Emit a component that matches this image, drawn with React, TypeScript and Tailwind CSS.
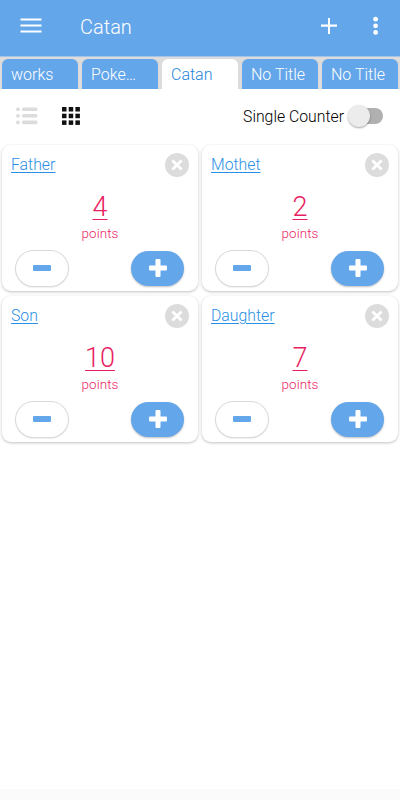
import { useState } from "react";

const tabs = ["works", "Poke…", "Catan", "No Title", "No Title"];

const initialPlayers = [
  { name: "Father", points: 4 },
  { name: "Mothet", points: 2 },
  { name: "Son", points: 10 },
  { name: "Daughter", points: 7 },
];

type CardProps = {
  name: string;
  points: number;
  onChange: (delta: number) => void;
  onRemove: () => void;
};

function CounterCard({ name, points, onChange, onRemove }: CardProps) {
  return (
    <div className="flex h-[146px] flex-col rounded-[9px] bg-white shadow-[0_1px_3px_rgba(0,0,0,0.25)]">
      <div className="flex h-[40px] items-center justify-between pl-[9px] pr-[9px]">
        <span className="text-[15.8px] font-light leading-5 text-[#2a8fe6] underline decoration-1 underline-offset-2">
          {name}
        </span>
        <button
          onClick={onRemove}
          className="flex size-6 items-center justify-center rounded-full bg-[#dcdcdc]"
        >
          <svg width="12" height="12" viewBox="0 0 12 12" stroke="white" strokeWidth="2.8">
            <path d="M1.4 1.4l9.2 9.2M10.6 1.4l-9.2 9.2" />
          </svg>
        </button>
      </div>
      <div className="flex flex-col items-center pt-[7px] text-[#e91e63]">
        <span className="text-[27px] font-light leading-[31px] underline decoration-1 underline-offset-[3px]">
          {points}
        </span>
        <span className="mt-[3px] text-[13.4px] font-light leading-4 tracking-[0.1px]">points</span>
      </div>
      <div className="mt-auto flex justify-between pb-[5px] pl-[14px] pr-[14px]">
        <button
          onClick={() => onChange(-1)}
          className="flex h-[35px] w-[52px] items-center justify-center rounded-full bg-white shadow-[0_0_0_1px_#d9d9d9,0_1px_2px_rgba(0,0,0,0.2)]"
        >
          <span className="h-[6px] w-[18px] rounded-[1px] bg-[#64a6ea]" />
        </button>
        <button
          onClick={() => onChange(1)}
          className="flex h-[35px] w-[53px] items-center justify-center rounded-full bg-[#64a6ea] shadow-[0_1px_2px_rgba(0,0,0,0.25)]"
        >
          <svg width="18" height="18" viewBox="0 0 18 18" fill="white">
            <rect x="6.5" y="0" width="5" height="18" rx="1" />
            <rect x="0" y="6.5" width="18" height="5" rx="1" />
          </svg>
        </button>
      </div>
    </div>
  );
}

export default function App() {
  const [activeTab, setActiveTab] = useState(2);
  const [single, setSingle] = useState(false);
  const [players, setPlayers] = useState(initialPlayers);

  const changePoints = (index: number, delta: number) => {
    setPlayers(players.map((p, i) => (i === index ? { ...p, points: p.points + delta } : p)));
  };

  return (
    <main className="flex h-[800px] w-[400px] flex-col overflow-hidden bg-white font-[Roboto,sans-serif]">
      {/* App bar */}
      <header className="flex h-14 shrink-0 items-center bg-[#64a6ea] pb-[5px] pl-5 text-white">
        <button className="flex">
          <svg width="22" height="16" viewBox="0 0 22 16" fill="white">
            <rect x="0.5" y="0.5" width="21" height="2" />
            <rect x="0.5" y="6.5" width="21" height="2" />
            <rect x="0.5" y="12.5" width="21" height="2" />
          </svg>
        </button>
        <h1 className="ml-[38px] pt-[2px] text-[20px] font-light leading-6">Catan</h1>
        <button className="ml-auto">
          <svg width="18" height="18" viewBox="0 0 18 18" fill="white">
            <rect x="8" y="1" width="2" height="16" />
            <rect x="1" y="7.5" width="16" height="2.2" />
          </svg>
        </button>
        <button className="ml-[35px] mr-[21px]">
          <svg width="6" height="20" viewBox="0 0 6 20" fill="white">
            <circle cx="2.6" cy="3.2" r="2.4" />
            <circle cx="2.6" cy="9.8" r="2.4" />
            <circle cx="2.6" cy="16.4" r="2.4" />
          </svg>
        </button>
      </header>

      {/* Tabs */}
      <nav className="grid h-[33px] shrink-0 grid-cols-5 gap-1 border-t border-[#a5c4e6] bg-[#dcdcdc] px-[2px] pt-[2px]">
        {tabs.map((tab, i) => (
          <button
            key={i}
            onClick={() => setActiveTab(i)}
            className={
              i === activeTab
                ? "rounded-t-md bg-white pl-[9px] pt-[2px] text-left text-base font-light leading-5 text-[#2386dc]"
                : "rounded-t-md bg-[#64a6ea] pl-[9px] pt-[2px] text-left text-base font-light leading-5 text-white"
            }
          >
            {tab}
          </button>
        ))}
      </nav>

      {/* View mode and single counter switch */}
      <div className="flex h-[55px] shrink-0 items-center pb-[2px] pl-4 pr-[17px]">
        <button>
          <svg width="22" height="18" viewBox="0 0 22 18" fill="#dcdcdc">
            {[2.2, 8.8, 15.4].map((y) => (
              <g key={y}>
                <circle cx="2" cy={y} r="1.9" />
                <rect x="6" y={y - 1.8} width="15.5" height="3.6" rx="1.5" />
              </g>
            ))}
          </svg>
        </button>
        <button className="ml-6">
          <svg width="18" height="18" viewBox="0 0 18 18" fill="#111">
            {[0, 6.7, 13.4].map((y) =>
              [0, 6.7, 13.4].map((x) => (
                <rect key={x + "-" + y} x={x} y={y} width="4.5" height="4.5" />
              ))
            )}
          </svg>
        </button>
        <span className="ml-auto pt-[2px] text-[15.8px] font-light text-black">Single Counter</span>
        <button
          onClick={() => setSingle(!single)}
          className="ml-[5px] flex h-6 w-[34px] items-center"
        >
          <span
            className={
              single
                ? "flex h-4 w-[34px] items-center justify-end rounded-full bg-[#64a6ea]"
                : "flex h-4 w-[34px] items-center rounded-full bg-[#b0b0b0]"
            }
          >
            <span className="-ml-[1px] size-[22px] shrink-0 rounded-full bg-[#ececec] shadow-[0_1px_2px_rgba(0,0,0,0.35)]" />
          </span>
        </button>
      </div>

      {/* Counters */}
      <section className="grid grid-cols-2 gap-x-1 gap-y-[5px] px-[2px] pt-[0.5px]">
        {players.map((p, i) => (
          <CounterCard
            key={p.name}
            name={p.name}
            points={p.points}
            onChange={(delta) => changePoints(i, delta)}
            onRemove={() => setPlayers(players.filter((_, j) => j !== i))}
          />
        ))}
      </section>

      <footer className="mt-auto h-[11px] shrink-0 bg-[#fbfbfb]" />
    </main>
  );
}
